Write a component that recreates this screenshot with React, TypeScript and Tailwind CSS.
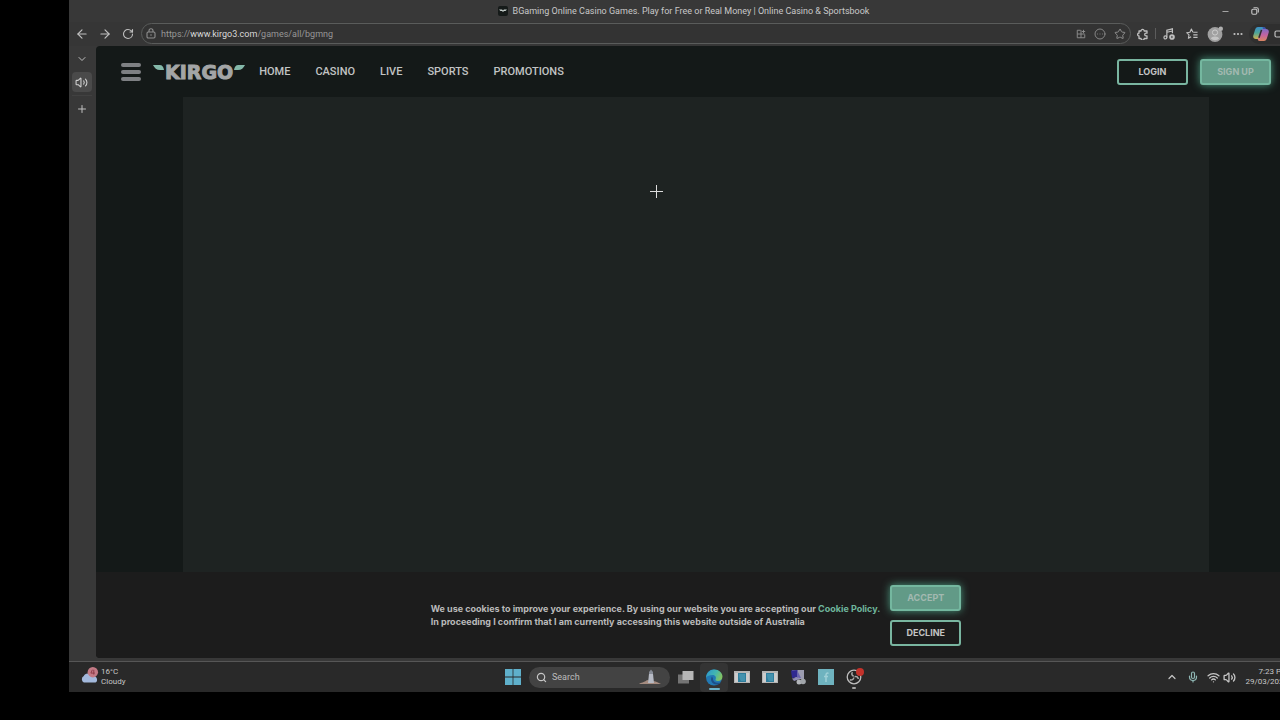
import React from 'react';
import {
  ArrowLeft, ArrowRight, RotateCw, ChevronDown, ChevronUp, Volume2, Plus, Star,
  Minus, Ellipsis, Mic, Wifi, Search, CircleEllipsis, X,
} from 'lucide-react';

const NAV_LINKS = ['HOME', 'CASINO', 'LIVE', 'SPORTS', 'PROMOTIONS'];

const TitleBar: React.FC = () => (
  <div className="grid grid-cols-[1fr_auto_1fr] items-center h-[22px] shrink-0">
    <span />
    <div className="flex items-center gap-[5px]">
      <svg viewBox="0 0 10 10" className="w-[10px] h-[10px]">
        <rect width="10" height="10" rx="2" fill="#151a19" />
        <path d="M1 3.500h3l1 1 1-1h3L7.500 5H6L5 6 4 5H2.500z" fill="#c9d2cf" />
      </svg>
      <h1 className="text-[9px] leading-3 text-[#c8c8c8] whitespace-nowrap">
        BGaming Online Casino Games. Play for Free or Real Money | Online Casino &amp; Sportsbook
      </h1>
    </div>
    <div className="flex justify-end text-[#c8c8c8]">
      <button aria-label="Minimize" className="w-[29px] h-5 flex items-center justify-center"><Minus size={9} /></button>
      <button aria-label="Restore" className="w-[29px] h-5 flex items-center justify-center">
        <svg viewBox="0 0 8 8" className="w-2 h-2" fill="none" stroke="currentColor" strokeWidth="1.1">
          <rect x=".8" y="2.300" width="5" height="5" rx="1.200" />
          <path d="M2.500.8h3.300c.8 0 1.500.7 1.500 1.500v3.200" />
        </svg>
      </button>
      <button aria-label="Close" className="w-[29px] h-5 flex items-center justify-center"><X size={9} /></button>
    </div>
  </div>
);

const ToolButton: React.FC<{ label: string; children: React.ReactNode }> = ({ label, children }) => (
  <button aria-label={label} className="w-[23px] h-5 shrink-0 flex items-center justify-center text-[#c0c0c0]">
    {children}
  </button>
);

const Toolbar: React.FC = () => (
  <div className="flex items-center h-6 shrink-0 pt-px pb-[2px] pl-px bg-[#363636]">
    <ToolButton label="Back"><ArrowLeft size={14} strokeWidth={2} /></ToolButton>
    <ToolButton label="Forward"><ArrowRight size={14} strokeWidth={2} /></ToolButton>
    <ToolButton label="Reload"><RotateCw size={12} strokeWidth={2.2} /></ToolButton>
    <div className="flex-1 ml-[2px] flex items-center h-[21px] rounded-full border border-[#5a5c5b] bg-[#333333] pl-[4px] pr-[4px] text-[#8f8f8f]">
      <svg viewBox="0 0 10 11" className="w-[10px] h-[11px]" fill="none" stroke="currentColor" strokeWidth="1.1">
        <rect x="1" y="4" width="8" height="6" rx="1.200" />
        <path d="M3 4V2.800a2 2 0 0 1 4 0V4M5 6.300v1.400" />
      </svg>
      <div className="flex-1 ml-[5px] text-[9px] leading-3 text-[#979797]">
        https://<span className="text-[#dadada]">www.kirgo3.com</span>/games/all/bgmng
      </div>
      <div className="flex items-center gap-[8px]">
        <svg viewBox="0 0 12 12" className="w-[10px] h-[10px]" fill="none" stroke="currentColor" strokeWidth="1.1">
          <path d="M5.500 1.500h-4v9h9v-4M1.500 6h9M6 1.500v9M9 1v4M7 3h4" />
        </svg>
        <CircleEllipsis size={12} strokeWidth={1.8} />
        <Star size={12} strokeWidth={2} />
      </div>
    </div>
    <ToolButton label="Extensions">
      <svg viewBox="0 0 12 12" className="w-3 h-3" fill="none" stroke="currentColor" strokeWidth="1.3" strokeLinejoin="round">
        <path d="M2 3h2a1.600 1.600 0 0 1 3.200 0H10v2.200H9a1.300 1.300 0 0 0 0 2.600h1V10.500H7.200a1.500 1.500 0 0 1-3.200 0H2V8a1.400 1.400 0 0 1 0-2.800z" />
      </svg>
    </ToolButton>
    <span className="w-px h-[11px] mx-px bg-[#5c5c5c]" />
    <ToolButton label="Media">
      <svg viewBox="0 0 14 14" className="w-3 h-3" fill="none" stroke="currentColor" strokeWidth="1.4">
        <path d="M4.500 11V2.500L11 1v5M4.500 5 11 3.500" />
        <circle cx="2.800" cy="11" r="1.700" />
        <circle cx="10.500" cy="10.500" r="3.300" fill="currentColor" stroke="none" />
        <path d="m9.800 9 2 1.500-2 1.500z" fill="#363636" stroke="none" />
      </svg>
    </ToolButton>
    <ToolButton label="Favorites">
      <svg viewBox="0 0 14 14" className="w-3 h-3" fill="none" stroke="currentColor" strokeWidth="1.3" strokeLinejoin="round">
        <path d="M8 5 6.300 1.200 4.600 5 .8 5.500l2.700 2.600L2.800 12 6 10.200M8.500 5H13.500M8.500 8H13.500M8.500 11H13.500" />
      </svg>
    </ToolButton>
    <ToolButton label="Profile">
      <svg viewBox="0 0 16 16" className="w-4 h-4">
        <circle cx="8" cy="8.500" r="7.400" fill="#a0a0a0" />
        <circle cx="8" cy="6.500" r="2.600" fill="none" stroke="#cdcdcd" />
        <path d="M3.800 12.500c1-2.800 7.400-2.800 8.400 0a6 6 0 0 1-8.400 0z" fill="#c4c4c4" />
        <circle cx="13.800" cy="2.700" r="2.200" fill="#b0b0b0" />
      </svg>
    </ToolButton>
    <ToolButton label="Settings"><Ellipsis size={12} strokeWidth={2.400} /></ToolButton>
    <div className="flex items-center rounded-l-full bg-[#2f2f2f]">
      <ToolButton label="Copilot">
        <svg viewBox="0 0 16 16" className="w-4 h-4">
          <defs>
            <linearGradient id="cpA" x1="0" y1="0" x2="0" y2="1">
              <stop offset="0" stopColor="#3a8fc9" /><stop offset=".5" stopColor="#4fa595" /><stop offset="1" stopColor="#cfb04e" />
            </linearGradient>
            <linearGradient id="cpB" x1="0" y1="0" x2="0" y2="1">
              <stop offset="0" stopColor="#7d6cc4" /><stop offset=".5" stopColor="#c263a0" /><stop offset="1" stopColor="#d98560" />
            </linearGradient>
          </defs>
          <path d="M5 1h4.500C11 1 11.500 2 11 3.500L8.500 11c-.5 1.300-1.200 2-2.500 2H3C.8 13-.2 11.500.3 9.500L2 4c.6-2 1.500-3 3-3z" fill="url(#cpA)" />
          <path d="M11 15H6.500C5 15 4.500 14 5 12.500L7.500 5C8 3.700 8.700 3 10 3h3c2.200 0 3.200 1.500 2.700 3.500L14 12c-.6 2-1.500 3-3 3z" fill="url(#cpB)" />
          <path d="M9.300 4 6.700 12l-1.500-.5L7.800 3.800z" fill="#2f2f2f" />
          <path d="M9.500 1H11c1.300 0 1.800 1 2 2h-3z" fill="#3b55a8" />
        </svg>
      </ToolButton>
      <button aria-label="Copilot menu" className="w-[26px] shrink-0 flex pl-[2px] text-[#c0c0c0]">
        <svg viewBox="0 0 8 8" className="w-2 h-2" fill="none" stroke="currentColor" strokeWidth="1.2">
          <rect x="1" y="1" width="6" height="6" rx="1.500" />
        </svg>
      </button>
    </div>
  </div>
);

const SideTabs: React.FC = () => (
  <aside className="w-[27px] pr-[2px] shrink-0 flex flex-col items-center text-[#c0c0c0]">
    <button aria-label="Tab actions" className="h-[26px] flex items-center justify-center"><ChevronDown size={12} strokeWidth={2} /></button>
    <button aria-label="Playing tab" className="w-5 h-5 flex items-center justify-center rounded bg-[#4a4a4a] text-[#d0d0d0]">
      <Volume2 size={13} strokeWidth={2} />
    </button>
    <span className="w-5 h-px mt-[3px] bg-[#414141]" />
    <button aria-label="New tab" className="h-[25px] flex items-center justify-center"><Plus size={12} strokeWidth={2} /></button>
  </aside>
);

const OutlineButton: React.FC<{ children: React.ReactNode }> = ({ children }) => (
  <button className="w-[71px] h-[26px] rounded-[3px] border-2 border-[#79b5a0] text-[9px] leading-3 font-bold text-[#c4c4c4]">
    {children}
  </button>
);

const GlowButton: React.FC<{ children: React.ReactNode }> = ({ children }) => (
  <button className="w-[71px] h-[26px] rounded-[3px] border-2 border-[#74b79f] bg-[#629a87] shadow-[0_0_8px_#4c9a80] text-[9px] leading-3 font-bold text-[#a3b9b1]">
    {children}
  </button>
);

const KirgoLogo: React.FC = () => (
  <a href="#" aria-label="Kirgo" className="flex items-center ml-3 text-[#a3a5a6]">
    <svg viewBox="0 0 12 14" className="w-3 h-[14px]">
      <path d="M0 0h6.500C9.500 0 10.500 2 11 5H7C3.500 5 1.500 3 0 0z" fill="#84b8a9" />
    </svg>
    <span className="font-['DejaVu_Sans',sans-serif] font-bold text-[19px] leading-5 [-webkit-text-stroke:1px_#a3a5a6]">KIRGO</span>
    <svg viewBox="0 0 12 14" className="w-3 h-[14px]">
      <path d="M12 0H5.500C2.500 0 1.500 2 1 5h4c3.500 0 5.500-2 7-5z" fill="#84b8a9" />
    </svg>
  </a>
);

const SiteHeader: React.FC = () => (
  <header className="flex items-center h-[51px] shrink-0 px-[25px]">
    <button aria-label="Menu" className="w-5 flex flex-col gap-[3px]">
      <span className="h-[4px] rounded-[2px] bg-[#7e8083]" />
      <span className="h-[4px] rounded-[2px] bg-[#7e8083]" />
      <span className="h-[4px] rounded-[2px] bg-[#7e8083]" />
    </button>
    <KirgoLogo />
    <nav className="flex gap-[25px] ml-[14px] font-['Roboto','Inter',sans-serif] text-[11px] leading-4 font-medium text-[#c2c4c4]">
      {NAV_LINKS.map(link => <a key={link} href="#">{link}</a>)}
    </nav>
    <div className="ml-auto flex gap-3">
      <OutlineButton>LOGIN</OutlineButton>
      <GlowButton>SIGN UP</GlowButton>
    </div>
  </header>
);

const CookieBar: React.FC = () => (
  <div className="flex items-center justify-center gap-[10px] h-[86px] shrink-0 bg-[#1c1c1c]">
    <p className="text-[9px] leading-[13px] font-bold text-[#bababa] whitespace-nowrap">
      We use cookies to improve your experience. By using our website you are accepting our{' '}
      <a href="#" className="text-[#6fb69d]">Cookie Policy.</a>
      <br />
      In proceeding I confirm that I am currently accessing this website outside of Australia
    </p>
    <div className="flex flex-col gap-[9px]">
      <GlowButton>ACCEPT</GlowButton>
      <OutlineButton>DECLINE</OutlineButton>
    </div>
  </div>
);

const TaskButton: React.FC<{ label: string; active?: boolean; children: React.ReactNode }> = ({ label, active, children }) => (
  <button
    aria-label={label}
    className={`w-7 h-[29px] flex items-center justify-center ${active ? 'rounded bg-[#343434]' : ''}`}
  >
    {children}
  </button>
);

const WindowIcon: React.FC = () => (
  <svg viewBox="0 0 16 14" className="w-4 h-[14px]">
    <rect y="1" width="16" height="12" fill="#b4b4b4" />
    <rect x="1" y="3" width="14" height="9" fill="#cccccc" />
    <rect x="4" y="3" width="8" height="9" fill="#2f7d9c" />
    <path d="M5 4h6v7H7c-1.500-2-2-4-2-7z" fill="#4492ae" />
  </svg>
);

const Taskbar: React.FC = () => (
  <footer className="grid grid-cols-[1fr_auto_1fr] items-center h-[31px] shrink-0 border-t border-[#565656] bg-[#292929] text-[#c6c6c6]">
    <div className="flex items-center gap-[2px] pl-[11px] text-[8px] leading-[10px]">
      <svg viewBox="0 0 20 18" className="w-[19px] h-[18px] -mt-1">
        <path d="M4 17a4 4 0 0 1 0-7c1-3 6-4 8 0 3-.5 6 1 6 4 0 2-1 3-3 3z" fill="#a3b9dc" />
        <circle cx="13.500" cy="6" r="5.500" fill="#c27a85" />
        <path d="M13 3.500 11.500 7h4M14.500 3.500v5" stroke="#8c3a46" fill="none" />
      </svg>
      <div>
        <p>16°C</p>
        <p>Cloudy</p>
      </div>
    </div>

    <div className="flex items-center">
      <TaskButton label="Start">
        <svg viewBox="0 0 16 16" className="w-4 h-4" fill="#5fb0cb">
          <path d="M0 0h7.600v7.600H0zM8.400 0H16v7.600H8.400zM0 8.400h7.600V16H0zM8.400 8.400H16V16H8.400z" />
        </svg>
      </TaskButton>
      <label className="flex items-center w-[141px] h-[21px] mx-[2px] pl-[7px] pr-2 rounded-full bg-[#434343]">
        <Search size={11} strokeWidth={2.6} className="shrink-0" />
        <input type="text" placeholder="Search" aria-label="Search" className="min-w-0 flex-1 ml-[5px] bg-transparent text-[9px] leading-3 outline-none placeholder:text-[#bcbcbc]" />
        <svg viewBox="0 0 24 16" className="w-6 h-4 shrink-0">
          <path d="M1 15c2-2 5-1 8-4l5 1c4 0 6 1.500 9 3z" fill="#a58c80" />
          <path d="M10 14l1-9h4l1 9z" fill="#b6bac4" />
          <path d="M11 3 13 .5l2 2.500v2h-4z" fill="#868b96" />
        </svg>
      </label>
      <TaskButton label="Task view">
        <svg viewBox="0 0 16 14" className="w-4 h-[14px]">
          <rect y="4.500" width="11" height="9" fill="#747474" />
          <rect x="4.500" y="1" width="11" height="9" fill="#b6b6b6" />
        </svg>
      </TaskButton>
      <TaskButton label="Edge" active>
        <svg viewBox="0 0 18 22" className="w-[18px] h-[22px] mt-[6px]">
          <defs>
            <linearGradient id="edgeTop" x1="0" y1="0" x2="1" y2=".4">
              <stop offset="0" stopColor="#2b93cf" /><stop offset=".6" stopColor="#42b6b0" /><stop offset="1" stopColor="#7fc266" />
            </linearGradient>
          </defs>
          <circle cx="9" cy="8.500" r="8" fill="#2279b4" />
          <path d="M1 8.500C1.500 3.500 5 .5 9 .5c5 0 8.500 3.500 8.500 7 0 3-2.200 4.500-4.700 4.500-2 0-2.600-.8-2.200-1.700.9-1.700 0-4.300-3-4.300C4.500 6 2 7 1 8.500z" fill="url(#edgeTop)" />
          <path d="M7 7.500c-2.500 3.500.2 8 4.500 8 2 0 3.700-.8 4.700-2.300-4.200 1.700-8.500-.2-8.200-3.700z" fill="#1d4f8a" />
          <rect x="4" y="19" width="11" height="2" rx="1" fill="#6cb4cd" />
        </svg>
      </TaskButton>
      <TaskButton label="Window one"><WindowIcon /></TaskButton>
      <TaskButton label="Window two"><WindowIcon /></TaskButton>
      <TaskButton label="Remote">
        <svg viewBox="0 0 16 16" className="w-4 h-4">
          <path d="M2 1h12v9H5z" fill="#9c9cb0" />
          <path d="M1 1.500 7.500 1v7L2 9z" fill="#2f2890" />
          <path d="M7.500 2 11 9H7z" fill="#6a63ae" />
          <path d="m2 9.500 7-1 1 1.500-6 2z" fill="#8f8bb4" />
          <circle cx="9" cy="13" r="2.500" fill="#b3b6ba" />
          <circle cx="13" cy="12.500" r="2.800" fill="#a1a5aa" />
        </svg>
      </TaskButton>
      <TaskButton label="Files">
        <svg viewBox="0 0 16 16" className="w-4 h-4">
          <rect width="16" height="16" fill="#6fb3bf" />
          <path d="M10.500 4.500C9 3.500 8 4.500 8 6v7M6 7.500h4" stroke="#9fd0d7" strokeWidth="1.500" fill="none" />
        </svg>
      </TaskButton>
      <TaskButton label="Recorder">
        <svg viewBox="0 0 20 22" className="w-5 h-[22px] ml-[2px] mt-1">
          <circle cx="9" cy="9" r="6.800" fill="#242424" stroke="#bdbdbd" strokeWidth="1.300" />
          <path d="M8.700 8.300c-2-.8-2.400-2.500-1.200-4M9.600 8.600c2-.6 3.600.5 3.700 2.400M8.800 9.500c-.2 2-2 3-4 2.200" stroke="#a8a8a8" strokeWidth="1.500" fill="none" />
          <circle cx="15" cy="4" r="4" fill="#c3322b" />
          <rect x="7" y="19" width="4" height="2" rx="1" fill="#a5a5a5" />
        </svg>
      </TaskButton>
    </div>

    <div className="flex items-center justify-end pr-[10px]">
      <ChevronUp size={12} strokeWidth={2.400} className="mr-[9px]" />
      <Mic size={12} strokeWidth={2.400} className="mr-[8px] text-[#8fb7b4]" />
      <Wifi size={13} strokeWidth={2.400} className="mr-[3px]" />
      <Volume2 size={13} strokeWidth={2.400} className="mr-[9px]" />
      <div className="text-[8px] leading-[10px] text-right whitespace-nowrap">
        <p>7:23 PM</p>
        <p>29/03/2025</p>
      </div>
    </div>
  </footer>
);

const App: React.FC = () => (
  <div className="min-h-screen flex bg-black pl-[69px] pb-7 overflow-hidden">
    {/* the desktop runs a little past the right edge of the view */}
    <div className="flex-1 min-w-0 -mr-[18px] flex flex-col bg-[#383838] font-['Roboto','Noto_Sans',sans-serif]">
      <TitleBar />
      <Toolbar />
      <div className="flex-1 flex pr-[2px] pb-[3px]">
        <SideTabs />
        <div className="relative flex-1 min-w-0 flex flex-col rounded-l-[4px] overflow-hidden bg-[#141918] font-['Inter',sans-serif]">
          <SiteHeader />
          <main className="flex-1 mx-[87px] bg-[#1e2322]" />
          <CookieBar />
          <svg viewBox="0 0 13 13" className="absolute left-[554px] top-[139px] w-[13px] h-[13px]" stroke="#dcdcdc">
            <path d="M6.500 0v13M0 6.500h13" />
          </svg>
        </div>
      </div>
      <Taskbar />
    </div>
  </div>
);

export default App;
